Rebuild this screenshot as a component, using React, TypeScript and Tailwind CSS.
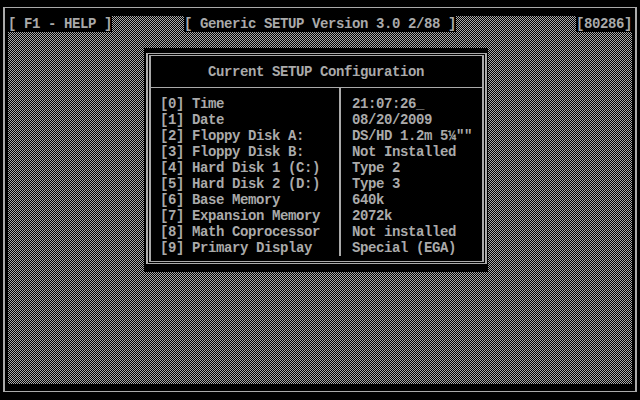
import React from "react";

const items: [string, string][] = [
  ["[0] Time", "21:07:26_"],
  ["[1] Date", "08/20/2009"],
  ["[2] Floppy Disk A:", "DS/HD 1.2m 5¼\"\""],
  ["[3] Floppy Disk B:", "Not Installed"],
  ["[4] Hard Disk 1 (C:)", "Type 2"],
  ["[5] Hard Disk 2 (D:)", "Type 3"],
  ["[6] Base Memory", "640k"],
  ["[7] Expansion Memory", "2072k"],
  ["[8] Math Coprocessor", "Not installed"],
  ["[9] Primary Display", "Special (EGA)"],
];

export default function App() {
  return (
    <div className="w-[640px] h-[400px] bg-black overflow-hidden font-['Liberation_Mono','DejaVu_Sans_Mono',monospace] text-[14px] leading-[16px] tracking-[-0.4px] font-bold text-[#aaaaaa]">
      <div className="ml-[3px] mt-[7px] w-[634px] h-[385px] border-x-2 border-y border-[#aaaaaa] pt-[8px] px-[3px] pb-[7px]">
        <div className="relative w-[624px] h-[368px]">
          <svg
            className="absolute inset-0"
            width={624}
            height={368}
            shapeRendering="crispEdges"
          >
            <defs>
              <pattern id="dither" width="2" height="2" patternUnits="userSpaceOnUse">
                <rect x="0" y="0" width="1" height="1" fill="#aaaaaa" />
                <rect x="1" y="1" width="1" height="1" fill="#aaaaaa" />
              </pattern>
            </defs>
            <rect width="624" height="368" fill="url(#dither)" />
          </svg>

          <div className="relative flex h-4">
            <div className="w-[104px] bg-black whitespace-pre">[ F1 - HELP ]</div>
            <div className="ml-[72px] w-[272px] bg-black whitespace-pre">
              [ Generic SETUP Version 3.0 2/88 ]
            </div>
            <div className="ml-auto w-[56px] bg-black whitespace-pre">[80286]</div>
          </div>

          <div className="relative ml-[136px] mt-4 w-[344px] h-[224px] bg-black pt-[5px] pl-[2px] pr-px pb-2">
            <div className="h-full border-x-2 border-y border-[#aaaaaa] p-px">
              <div className="h-full border-x-2 border-y border-[#aaaaaa] flex flex-col">
                <div className="h-6 pt-2 pl-[57px] whitespace-pre">Current SETUP Configuration</div>
                <div className="h-[7px]" />
                <div className="h-px bg-[#aaaaaa]" />
                <div className="flex h-[168px]">
                  <div className="w-[188px] pl-[9px] pt-2 flex flex-col">
                    {items.map(([label]) => (
                      <div key={label} className="h-4 whitespace-pre">
                        {label}
                      </div>
                    ))}
                  </div>
                  <div className="w-[2px] bg-[#aaaaaa]" />
                  <div className="pl-[11px] pt-2 flex flex-col">
                    {items.map(([label, value]) => (
                      <div key={label} className="h-4 whitespace-pre">
                        {value}
                      </div>
                    ))}
                  </div>
                </div>
              </div>
            </div>
          </div>
        </div>
      </div>
    </div>
  );
}
